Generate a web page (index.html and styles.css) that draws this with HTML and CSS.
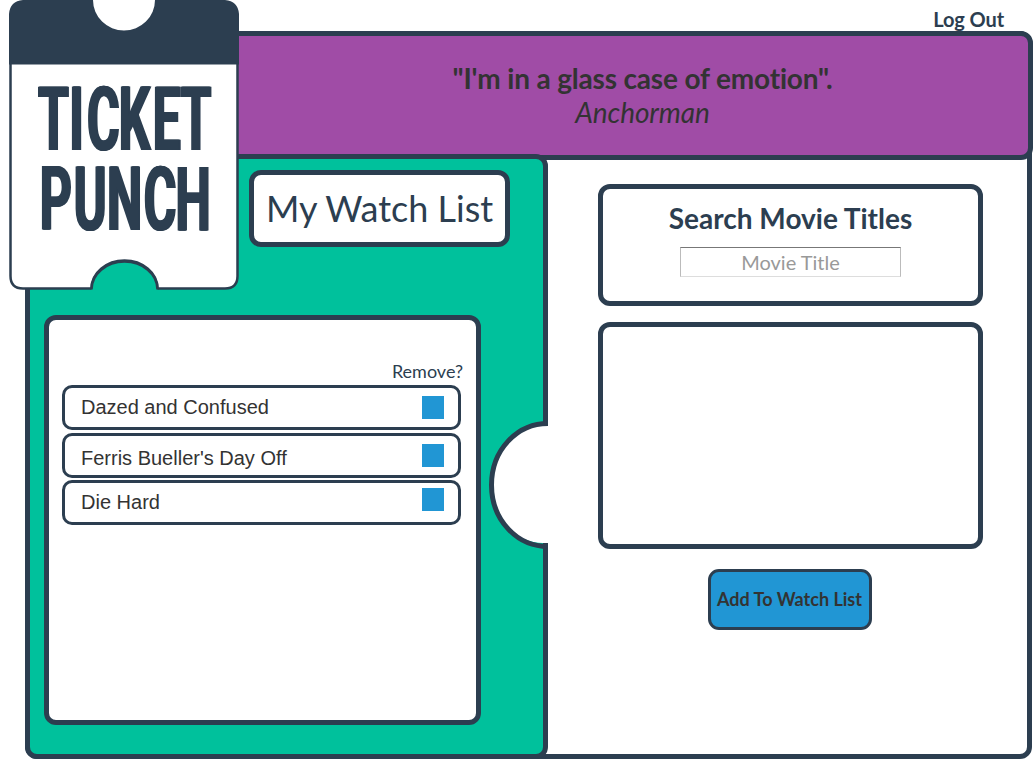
FILE: index.html
```html
<!DOCTYPE html>
<html lang="en">
<head>
<meta charset="utf-8">
<title>Ticket Punch</title>
<link rel="stylesheet" href="styles.css">
</head>
<body>
<nav class="topbar"><a class="logout">Log Out</a></nav>
<svg class="logo" width="230" height="290" viewBox="0 0 230 290" role="img" aria-label="Ticket Punch">
  <path class="logo-ticket" d="M1.5 60H228.500V276Q228.500 288.500 216 288.500H148.500A33 28 0 0 0 82.500 288.500H14Q1.500 288.500 1.500 276Z"/>
  <path class="logo-notch" d="M82.500 290V288A33 27 0 0 1 148.500 288V290Z"/>
  <path class="logo-arc" d="M82.500 289.500A33 28 0 0 1 148.500 289.500"/>
  <path class="logo-notch-top" d="M83 0H147A31 30.500 0 0 1 83 0Z"/>
  <path class="logo-top" d="M0 64.500V14Q1 1 14 0H84A31 30.500 0 0 0 146 0H216Q229 1 230 14V64.500Z"/>
  <g class="logo-word">
    <text transform="scale(.56 1)" y="150" x="50 106 137.500 194 255 304.500">TICKET</text>
    <text transform="scale(.56 1)" y="230" x="53 114 173 239 295.500">PUNCH</text>
  </g>
</svg>
<main class="stage">
  <header class="quote">
    <div class="quote-line">"I'm in a glass case of emotion".</div>
    <div class="quote-film">Anchorman</div>
  </header>
  <div class="columns">
    <section class="watch">
      <h1 class="watch-title">My Watch List</h1>
      <div class="list">
        <div class="remove-label">Remove?</div>
        <div class="row"><span>Dazed and Confused</span><i class="box"></i></div>
        <div class="row row-second"><span>Ferris Bueller's Day Off</span><i class="box"></i></div>
        <div class="row row-third"><span>Die Hard</span><i class="box"></i></div>
      </div>
      <svg class="bite" width="60" height="128" viewBox="0 0 60 128">
        <path class="bite-fill" d="M60 4H54C28 4 2.500 29 2.500 64S28 122 54 122H60Z"/>
        <path class="bite-edge" d="M59 2.500C28 2.500 2.500 29 2.500 64S28 125.500 59 125.500"/>
      </svg>
    </section>
    <section class="search">
      <div class="search-box">
        <h2 class="search-title">Search Movie Titles</h2>
        <input class="search-input" placeholder="Movie Title">
      </div>
      <div class="results"></div>
      <button class="add">Add To Watch List</button>
    </section>
  </div>
</main>
</body>
</html>
```

FILE: styles.css
```css
* { box-sizing: border-box; }
body { margin: 0; background: #fff; color: #333; font-family: Lato, sans-serif; font-variant-ligatures: none; position: relative; height: 759px; overflow: hidden; }
.topbar { height: 31px; padding: 7px 29px 0 0; text-align: right; }
.logout { font-size: 20px; line-height: 24px; font-weight: 700; color: #2c3e50; letter-spacing: -.1px; }
.stage { margin-left: 25px; width: 1007px; height: 728px; border: 5px solid #2c3e50; border-radius: 12px; }
.quote { height: 129px; margin: -5px -6px 0 -5px; padding: 25px 0 0 227px; border: 5px solid #2c3e50; border-radius: 12px; background: #a04ca6; text-align: center; font-size: 28px; line-height: 34px; }
.quote-line { font-weight: 700; letter-spacing: -.17px; }
.quote-film { font-style: italic; letter-spacing: -.1px; }
.columns { display: flex; margin: -6px 0 0 -5px; }
.watch { position: relative; width: 523px; height: 605px; padding: 11px 14px; background: #00c19c; border: 5px solid #2c3e50; border-radius: 12px; }
.watch-title { width: 261px; height: 77px; margin: 0 0 0 205px; border: 5px solid #2c3e50; border-radius: 12px; background: #fff; color: #2c3e50; font-size: 36px; line-height: 67px; font-weight: 400; text-align: center; }
.list { width: 437px; height: 410px; margin-top: 68px; padding: 41px 13px 0; border: 5px solid #2c3e50; border-radius: 12px; background: #fff; }
.remove-label { height: 24px; text-align: right; font-size: 18px; line-height: 21px; color: #2c3e50; }
.row { display: flex; justify-content: space-between; width: 399px; height: 45px; padding: 8px 14px 0 16px; border: 3px solid #2c3e50; border-radius: 10px; font-family: "Liberation Sans", Arial, sans-serif; font-size: 20px; line-height: 23px; }
.row-second { margin-top: 3px; }
.row-second span { padding-top: 3px; }
.row-third { margin-top: 2px; padding-top: 5px; }
.row-third span { padding-top: 3px; }
.box { width: 22px; height: 23px; background: #2196d4; }
.bite { position: absolute; left: 459px; top: 262px; }
.bite-fill { fill: #fff; }
.bite-edge { fill: none; stroke: #2c3e50; stroke-width: 5; }
.search { width: 385px; margin-left: 50px; padding-top: 30px; display: flex; flex-direction: column; align-items: center; }
.search-box { width: 385px; height: 122px; border: 5px solid #2c3e50; border-radius: 12px; text-align: center; padding-top: 12px; }
.search-title { margin: 0 0 12px; font-size: 28px; line-height: 34px; font-weight: 700; color: #2c3e50; }
.search-input { display: block; width: 221px; height: 30px; margin: 0 auto; padding: 2px; border: 1px solid #bbb; border-top-color: #777; border-bottom-color: #ddd; background: #fff; font: 20px Lato, sans-serif; text-align: center; outline: 0; }
.search-input::placeholder { color: #999; }
.results { width: 385px; height: 227px; margin-top: 16px; border: 5px solid #2c3e50; border-radius: 12px; }
.add { width: 164px; height: 61px; margin: 20px 2px 0 0; padding: 0 0 2px; border: 3px solid #2c3e50; border-radius: 11px; background: #2196d4; color: #333; font: 700 18px Lato, sans-serif; white-space: nowrap; }
.logo { position: absolute; left: 9px; top: 0; z-index: 3; }
.logo-ticket { fill: #fff; stroke: #2c3e50; stroke-width: 2.5; }
.logo-notch { fill: #00c19c; }
.logo-notch-top { fill: #fff; }
.logo-arc { fill: none; stroke: #2c3e50; stroke-width: 2.5; }
.logo-top { fill: #2c3e50; }
.logo-word { fill: #2c3e50; font-family: Roboto, sans-serif; font-weight: 700; font-size: 89px; filter: drop-shadow(1px 0 0 #2c3e50) drop-shadow(1px 0 0 #2c3e50); }
```
